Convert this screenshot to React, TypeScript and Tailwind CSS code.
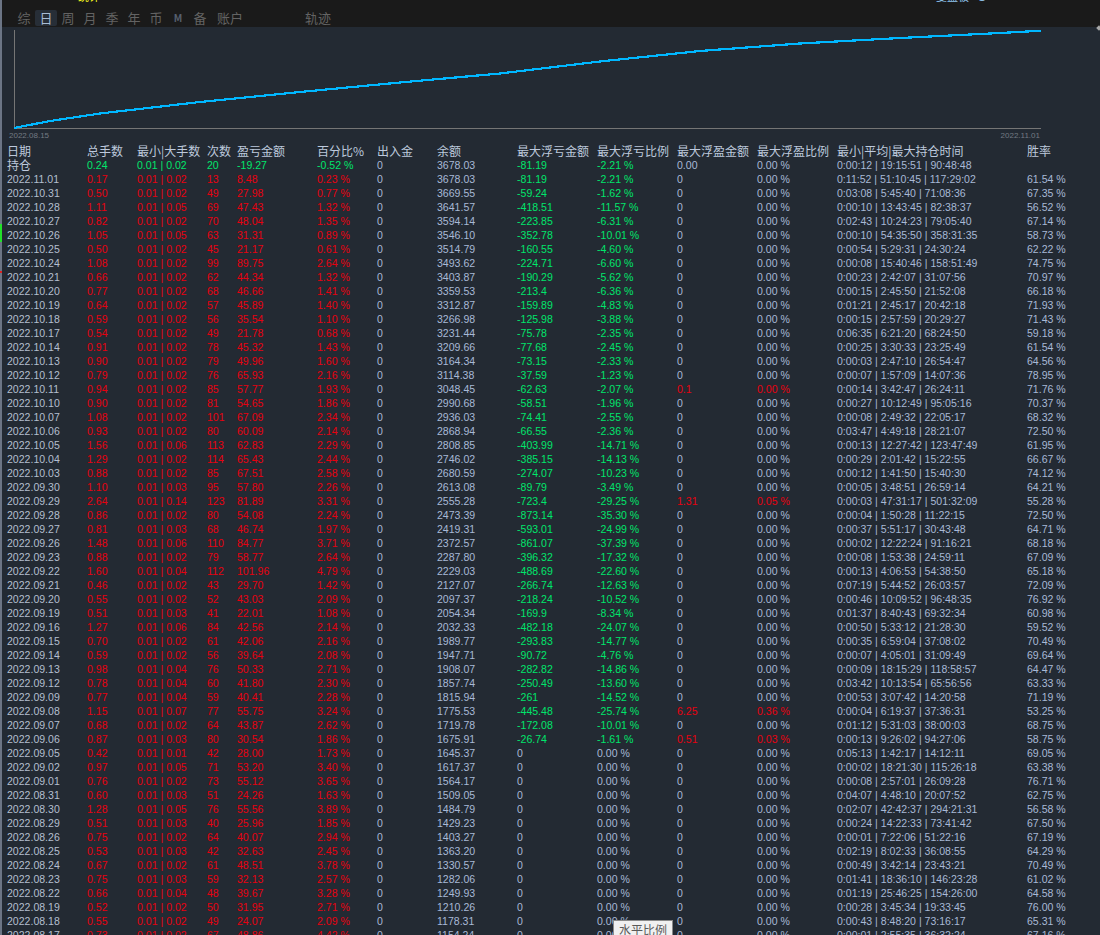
import React from 'react';

// date,lots,max,count,pnl,pct,balance,floatLoss,floatLossPct,floatWin,floatWinPct,times,winRate
const raw = `2022.11.01,0.17,0.02,13,8.48,0.23,3678.03,-81.19,-2.21,0,0.00,0:11:52 | 51:10:45 | 117:29:02,61.54
2022.10.31,0.50,0.02,49,27.98,0.77,3669.55,-59.24,-1.62,0,0.00,0:03:08 | 5:45:40 | 71:08:36,67.35
2022.10.28,1.11,0.05,69,47.43,1.32,3641.57,-418.51,-11.57,0,0.00,0:00:10 | 13:43:45 | 82:38:37,56.52
2022.10.27,0.82,0.02,70,48.04,1.35,3594.14,-223.85,-6.31,0,0.00,0:02:43 | 10:24:23 | 79:05:40,67.14
2022.10.26,1.05,0.05,63,31.31,0.89,3546.10,-352.78,-10.01,0,0.00,0:00:10 | 54:35:50 | 358:31:35,58.73
2022.10.25,0.50,0.02,45,21.17,0.61,3514.79,-160.55,-4.60,0,0.00,0:00:54 | 5:29:31 | 24:30:24,62.22
2022.10.24,1.08,0.02,99,89.75,2.64,3493.62,-224.71,-6.60,0,0.00,0:00:08 | 15:40:46 | 158:51:49,74.75
2022.10.21,0.66,0.02,62,44.34,1.32,3403.87,-190.29,-5.62,0,0.00,0:00:23 | 2:42:07 | 31:07:56,70.97
2022.10.20,0.77,0.02,68,46.66,1.41,3359.53,-213.4,-6.36,0,0.00,0:00:15 | 2:45:50 | 21:52:08,66.18
2022.10.19,0.64,0.02,57,45.89,1.40,3312.87,-159.89,-4.83,0,0.00,0:01:21 | 2:45:17 | 20:42:18,71.93
2022.10.18,0.59,0.02,56,35.54,1.10,3266.98,-125.98,-3.88,0,0.00,0:00:15 | 2:57:59 | 20:29:27,71.43
2022.10.17,0.54,0.02,49,21.78,0.68,3231.44,-75.78,-2.35,0,0.00,0:06:35 | 6:21:20 | 68:24:50,59.18
2022.10.14,0.91,0.02,78,45.32,1.43,3209.66,-77.68,-2.45,0,0.00,0:00:25 | 3:30:33 | 23:25:49,61.54
2022.10.13,0.90,0.02,79,49.96,1.60,3164.34,-73.15,-2.33,0,0.00,0:00:03 | 2:47:10 | 26:54:47,64.56
2022.10.12,0.79,0.02,76,65.93,2.16,3114.38,-37.59,-1.23,0,0.00,0:00:07 | 1:57:09 | 14:07:36,78.95
2022.10.11,0.94,0.02,85,57.77,1.93,3048.45,-62.63,-2.07,0.1,0.00,0:00:14 | 3:42:47 | 26:24:11,71.76
2022.10.10,0.90,0.02,81,54.65,1.86,2990.68,-58.51,-1.96,0,0.00,0:00:27 | 10:12:49 | 95:05:16,70.37
2022.10.07,1.08,0.02,101,67.09,2.34,2936.03,-74.41,-2.55,0,0.00,0:00:08 | 2:49:32 | 22:05:17,68.32
2022.10.06,0.93,0.02,80,60.09,2.14,2868.94,-66.55,-2.36,0,0.00,0:03:47 | 4:49:18 | 28:21:07,72.50
2022.10.05,1.56,0.06,113,62.83,2.29,2808.85,-403.99,-14.71,0,0.00,0:00:13 | 12:27:42 | 123:47:49,61.95
2022.10.04,1.29,0.02,114,65.43,2.44,2746.02,-385.15,-14.13,0,0.00,0:00:29 | 2:01:42 | 15:22:55,66.67
2022.10.03,0.88,0.02,85,67.51,2.58,2680.59,-274.07,-10.23,0,0.00,0:00:12 | 1:41:50 | 15:40:30,74.12
2022.09.30,1.10,0.03,95,57.80,2.26,2613.08,-89.79,-3.49,0,0.00,0:00:05 | 3:48:51 | 26:59:14,64.21
2022.09.29,2.64,0.14,123,81.89,3.31,2555.28,-723.4,-29.25,1.31,0.05,0:00:03 | 47:31:17 | 501:32:09,55.28
2022.09.28,0.86,0.02,80,54.08,2.24,2473.39,-873.14,-35.30,0,0.00,0:00:04 | 1:50:28 | 11:22:15,72.50
2022.09.27,0.81,0.03,68,46.74,1.97,2419.31,-593.01,-24.99,0,0.00,0:00:37 | 5:51:17 | 30:43:48,64.71
2022.09.26,1.48,0.06,110,84.77,3.71,2372.57,-861.07,-37.39,0,0.00,0:00:02 | 12:22:24 | 91:16:21,68.18
2022.09.23,0.88,0.02,79,58.77,2.64,2287.80,-396.32,-17.32,0,0.00,0:00:08 | 1:53:38 | 24:59:11,67.09
2022.09.22,1.60,0.04,112,101.96,4.79,2229.03,-488.69,-22.60,0,0.00,0:00:13 | 4:06:53 | 54:38:50,65.18
2022.09.21,0.46,0.02,43,29.70,1.42,2127.07,-266.74,-12.63,0,0.00,0:07:19 | 5:44:52 | 26:03:57,72.09
2022.09.20,0.55,0.02,52,43.03,2.09,2097.37,-218.24,-10.52,0,0.00,0:00:46 | 10:09:52 | 96:48:35,76.92
2022.09.19,0.51,0.03,41,22.01,1.08,2054.34,-169.9,-8.34,0,0.00,0:01:37 | 8:40:43 | 69:32:34,60.98
2022.09.16,1.27,0.06,84,42.56,2.14,2032.33,-482.18,-24.07,0,0.00,0:00:50 | 5:33:12 | 21:28:30,59.52
2022.09.15,0.70,0.02,61,42.06,2.16,1989.77,-293.83,-14.77,0,0.00,0:00:35 | 6:59:04 | 37:08:02,70.49
2022.09.14,0.59,0.02,56,39.64,2.08,1947.71,-90.72,-4.76,0,0.00,0:00:07 | 4:05:01 | 31:09:49,69.64
2022.09.13,0.98,0.04,76,50.33,2.71,1908.07,-282.82,-14.86,0,0.00,0:00:09 | 18:15:29 | 118:58:57,64.47
2022.09.12,0.78,0.04,60,41.80,2.30,1857.74,-250.49,-13.60,0,0.00,0:03:42 | 10:13:54 | 65:56:56,63.33
2022.09.09,0.77,0.04,59,40.41,2.28,1815.94,-261,-14.52,0,0.00,0:00:53 | 3:07:42 | 14:20:58,71.19
2022.09.08,1.15,0.07,77,55.75,3.24,1775.53,-445.48,-25.74,6.25,0.36,0:00:04 | 6:19:37 | 37:36:31,53.25
2022.09.07,0.68,0.02,64,43.87,2.62,1719.78,-172.08,-10.01,0,0.00,0:01:12 | 5:31:03 | 38:00:03,68.75
2022.09.06,0.87,0.03,80,30.54,1.86,1675.91,-26.74,-1.61,0.51,0.03,0:00:13 | 9:26:02 | 94:27:06,58.75
2022.09.05,0.42,0.01,42,28.00,1.73,1645.37,0,0.00,0,0.00,0:05:13 | 1:42:17 | 14:12:11,69.05
2022.09.02,0.97,0.05,71,53.20,3.40,1617.37,0,0.00,0,0.00,0:00:02 | 18:21:30 | 115:26:18,63.38
2022.09.01,0.76,0.02,73,55.12,3.65,1564.17,0,0.00,0,0.00,0:00:08 | 2:57:01 | 26:09:28,76.71
2022.08.31,0.60,0.03,51,24.26,1.63,1509.05,0,0.00,0,0.00,0:04:07 | 4:48:10 | 20:07:52,62.75
2022.08.30,1.28,0.05,76,55.56,3.89,1484.79,0,0.00,0,0.00,0:02:07 | 42:42:37 | 294:21:31,56.58
2022.08.29,0.51,0.03,40,25.96,1.85,1429.23,0,0.00,0,0.00,0:00:24 | 14:22:33 | 73:41:42,67.50
2022.08.26,0.75,0.02,64,40.07,2.94,1403.27,0,0.00,0,0.00,0:00:01 | 7:22:06 | 51:22:16,67.19
2022.08.25,0.53,0.03,42,32.63,2.45,1363.20,0,0.00,0,0.00,0:02:19 | 8:02:33 | 36:08:55,64.29
2022.08.24,0.67,0.02,61,48.51,3.78,1330.57,0,0.00,0,0.00,0:00:49 | 3:42:14 | 23:43:21,70.49
2022.08.23,0.75,0.03,59,32.13,2.57,1282.06,0,0.00,0,0.00,0:01:41 | 18:36:10 | 146:23:28,61.02
2022.08.22,0.66,0.04,48,39.67,3.28,1249.93,0,0.00,0,0.00,0:01:19 | 25:46:25 | 154:26:00,64.58
2022.08.19,0.52,0.02,50,31.95,2.71,1210.26,0,0.00,0,0.00,0:00:28 | 3:45:34 | 19:33:45,76.00
2022.08.18,0.55,0.02,49,24.07,2.09,1178.31,0,0.00,0,0.00,0:00:43 | 8:48:20 | 73:16:17,65.31
2022.08.17,0.73,0.02,67,48.86,4.42,1154.24,0,0.00,0,0.00,0:00:01 | 2:55:35 | 36:32:24,67.16`;

const rows = raw.split('\n').map((line) => line.split(','));

const gridCols =
  'grid h-[14px] grid-cols-[80px_50px_70px_30px_80px_60px_60px_80px_80px_80px_80px_80px_190px_1fr] items-center whitespace-nowrap pl-[7px] leading-[14px]';

const headers = [
  '日期', '总手数', '最小|大手数', '次数', '盈亏金额', '百分比%', '出入金', '余额',
  '最大浮亏金额', '最大浮亏比例', '最大浮盈金额', '最大浮盈比例', '最小|平均|最大持仓时间', '胜率',
];

const tabs = ['综', '日', '周', '月', '季', '年', '币'];

// measured off the curve, drawn with crisp edges so that it steps
const curve =
  '14,128 50,121 100,113.5 200,102 300,92 400,82.5 500,73.5 600,61.5 700,51 800,43.5 900,38 1000,33 1041,30.7';

const App: React.FC = () => {
  return (
    <div className="relative h-[935px] w-[1100px] overflow-hidden bg-[#232a33] font-['Liberation_Sans','Noto_Sans_CJK_SC',sans-serif] text-[10.55px] text-[#a8b9d6]">
      {/* Left edge marks */}
      <div className="absolute bottom-0 left-0 top-0 w-[2px] bg-[#6c7585]" />
      <div className="absolute left-0 top-[224px] h-[18px] w-[2px] bg-[#22e02a]" />
      <div className="absolute left-0 top-[271px] h-[2px] w-[2px] bg-[#e02020]" />

      {/* Top bar */}
      <div className="h-[27px] overflow-hidden bg-[#1a1a1a] pl-[13px]">
        <div className="relative flex h-0 text-[11px] leading-[10px]">
          <span className="ml-[65px] -mt-[8px] text-[#f7f71e]">统计</span>
          <span className="ml-[836px] -mt-[8px] text-[#8fc4ee]">复盘板 · 1</span>
        </div>
        <div className="flex h-[27px] items-end pb-[1px] font-['Noto_Sans_CJK_SC',sans-serif] text-[13px] leading-[16px] text-[#636363]">
          {tabs.map((t) => (
            <span
              key={t}
              className={
                t === '日'
                  ? 'flex h-[16px] w-[22px] items-center justify-center rounded-[2px] bg-[#272e37] text-[#a8bcd4]'
                  : 'flex h-[16px] w-[22px] items-center justify-center'
              }
            >
              {t}
            </span>
          ))}
          <span className="flex h-[16px] w-[22px] items-center justify-center text-[10px] font-bold text-[#56606e]">M</span>
          <span className="flex h-[16px] w-[22px] items-center justify-center">备</span>
          <span className="ml-[6px]">账户</span>
          <span className="ml-[62px]">轨迹</span>
        </div>
      </div>
      <div className="absolute right-[-1px] top-[26px] h-[4px] w-[4px] rotate-45 bg-[#a8a8a8]" />

      {/* Chart */}
      <svg className="block" width="1100" height="103" viewBox="0 27 1100 103" shapeRendering="crispEdges">
        <path d="M14.5 30V128.5H1041" fill="none" stroke="#757575" strokeWidth="1" />
        <polyline points={curve} fill="none" stroke="#00b7ff" strokeWidth="2.2" />
      </svg>
      <div className="flex h-[14px] items-start justify-between pl-[9px] pr-[60px] pt-[1px] text-[8px] leading-[9px] text-[#737a83]">
        <span>2022.08.15</span>
        <span>2022.11.01</span>
      </div>

      {/* Table */}
      <div className={`${gridCols} font-['Noto_Sans_CJK_SC',sans-serif] text-[12px] text-[#bdc9dc]`}>
        {headers.map((h) => (
          <span key={h}>{h}</span>
        ))}
      </div>
      <div className={gridCols}>
        <span className="font-['Noto_Sans_CJK_SC',sans-serif] text-[12px] leading-[12px] text-[#bdc9dc]">持仓</span>
        <span className="text-[#00e56b]">0.24</span>
        <span className="text-[#00e56b]">0.01 | 0.02</span>
        <span className="text-[#00e56b]">20</span>
        <span className="text-[#00e56b]">-19.27</span>
        <span className="text-[#00e56b]">-0.52 %</span>
        <span>0</span>
        <span>3678.03</span>
        <span className="text-[#00e56b]">-81.19</span>
        <span className="text-[#00e56b]">-2.21 %</span>
        <span>0.00</span>
        <span>0.00 %</span>
        <span>0:00:12 | 19:15:51 | 90:48:48</span>
        <span />
      </div>
      {rows.map((r) => {
        const hasLoss = r[7] !== '0';
        const hasWin = r[9] !== '0';
        return (
          <div key={r[0]} className={gridCols}>
            <span className="text-[#b4bfcf]">{r[0]}</span>
            <span className="text-[#e8000f]">{r[1]}</span>
            <span className="text-[#e8000f]">0.01 | {r[2]}</span>
            <span className="text-[#e8000f]">{r[3]}</span>
            <span className="text-[#e8000f]">{r[4]}</span>
            <span className="text-[#e8000f]">{r[5]} %</span>
            <span>0</span>
            <span>{r[6]}</span>
            <span className={hasLoss ? 'text-[#00e56b]' : ''}>{r[7]}</span>
            <span className={hasLoss ? 'text-[#00e56b]' : ''}>{r[8]} %</span>
            <span className={hasWin ? 'text-[#e8000f]' : ''}>{r[9]}</span>
            <span className={hasWin ? 'text-[#e8000f]' : ''}>{r[10]} %</span>
            <span>{r[11]}</span>
            <span>{r[12]} %</span>
          </div>
        );
      })}

      {/* Tooltip */}
      <div className="absolute left-[613px] top-[920px] h-[20px] w-[60px] border border-[#8a8a8a] bg-[#f0f0f0] text-center font-['Noto_Sans_CJK_SC',sans-serif] text-[12px] leading-[18px] text-[#5a5a5a]">
        水平比例
      </div>
    </div>
  );
};

export default App;
